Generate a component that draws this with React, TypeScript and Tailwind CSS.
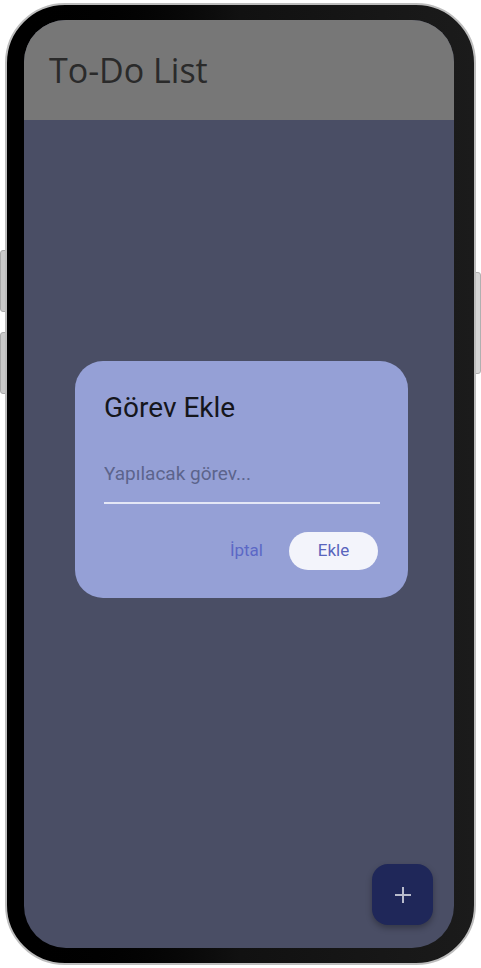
import React, { useState } from "react";

export default function App() {
  const [task, setTask] = useState("");

  return (
    <div className="w-[481px] h-[968px] bg-white relative" style={{ fontFamily: "Roboto, 'Liberation Sans', sans-serif" }}>
      {/* side buttons */}
      <div className="absolute left-0 top-[250px] w-[8px] h-[62px] rounded-l-[3px] bg-[#c9c9c9] border border-[#a9a9a9]" />
      <div className="absolute left-0 top-[332px] w-[8px] h-[62px] rounded-l-[3px] bg-[#c9c9c9] border border-[#a9a9a9]" />
      <div className="absolute right-0 top-[272px] w-[8px] h-[102px] rounded-r-[3px] bg-[#d6d6d6] border border-[#b0b0b0]" />

      <div className="absolute left-[5px] top-[3px] w-[471px] h-[962px] rounded-[60px] border-[2px] border-[#bdbdbd] bg-gradient-to-r from-black via-[#111] to-[#1b1b1b] pt-[15px] pb-[15px] pl-[17px] pr-[20px]">
        <div className="w-full h-full rounded-[42px] overflow-hidden bg-[#4a4e65] flex flex-col">
          <header className="h-[100px] bg-[#777777] flex items-center px-[25px]">
            <h1 className="text-[34px] text-[#2a2a2a]" style={{ fontFamily: "'Open Sans', 'Noto Sans', sans-serif" }}>
              To-Do List
            </h1>
          </header>

          <main className="flex-1 flex flex-col pt-[241px]">
            <div className="ml-[51px] w-[333px] h-[237px] rounded-[28px] bg-[#95a0d6] px-[29px] pt-[31px] flex flex-col">
              <h2 className="text-[28px] leading-[32px] text-[#15161c]">Görev Ekle</h2>
              <input
                value={task}
                onChange={(e) => setTask(e.target.value)}
                placeholder="Yapılacak görev..."
                className="mt-[38px] w-[276px] pb-[16px] bg-transparent outline-none border-b-2 border-[#e4e7f6] text-[19px] leading-[24px] text-[#202232] placeholder:text-[#5c648c]"
              />
              <div className="mt-[28px] flex items-center justify-end gap-[26px] pr-[1px]">
                <button className="text-[17px] text-[#5c68c6]">İptal</button>
                <button className="w-[89px] h-[38px] rounded-full bg-[#f3f4fb] text-[17px] text-[#5964bd]">Ekle</button>
              </div>
            </div>

            <div className="flex-1" />

            <button className="self-end mr-[21px] mb-[23px] w-[61px] h-[61px] rounded-[16px] bg-[#1f2759] shadow-[0_3px_6px_rgba(0,0,0,0.3)] flex items-center justify-center">
              <svg width="18" height="18" viewBox="0 0 18 18">
                <path d="M9 1v16M1 9h16" stroke="#b9bccc" strokeWidth="2" />
              </svg>
            </button>
          </main>
        </div>
      </div>
    </div>
  );
}
